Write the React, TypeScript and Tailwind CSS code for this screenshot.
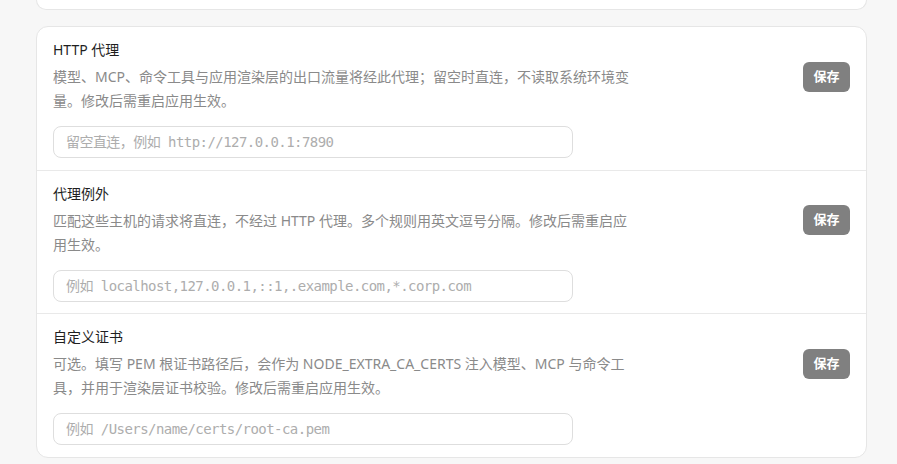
import React, { useState } from 'react';

interface ProxyField {
    id: string;
    title: string;
    description: string;
    placeholder: string;
}

const FIELDS: ProxyField[] = [
    {
        id: 'httpProxy',
        title: 'HTTP 代理',
        description: '模型、MCP、命令工具与应用渲染层的出口流量将经此代理；留空时直连，不读取系统环境变量。修改后需重启应用生效。',
        placeholder: '留空直连，例如 http://127.0.0.1:7890',
    },
    {
        id: 'noProxy',
        title: '代理例外',
        description: '匹配这些主机的请求将直连，不经过 HTTP 代理。多个规则用英文逗号分隔。修改后需重启应用生效。',
        placeholder: '例如 localhost,127.0.0.1,::1,.example.com,*.corp.com',
    },
    {
        id: 'extraCaCerts',
        title: '自定义证书',
        description: '可选。填写 PEM 根证书路径后，会作为 NODE_EXTRA_CA_CERTS 注入模型、MCP 与命令工具，并用于渲染层证书校验。修改后需重启应用生效。',
        placeholder: '例如 /Users/name/certs/root-ca.pem',
    },
];

const FieldRow: React.FC<{ field: ProxyField; last: boolean }> = ({ field, last }) => {
    const [value, setValue] = useState('');

    return (
        <div className={`px-4 pt-[13px] pb-[11.5px] ${last ? '' : 'border-b border-[#e9e9e9]'}`}>
            <div className="flex items-center justify-between">
                <div className="max-w-[584px]">
                    <h3 className="text-[14px] leading-5 text-[#1f1f1f]">{field.title}</h3>
                    <p className="mt-[5px] text-[14px] leading-6 text-[#8a8a8a]">{field.description}</p>
                </div>
                <button className="h-[30px] w-[47px] rounded-md bg-[#808080] text-[13px] font-bold text-white">
                    保存
                </button>
            </div>
            <input
                value={value}
                onChange={e => setValue(e.target.value)}
                placeholder={field.placeholder}
                className="mt-[13px] block h-8 w-[520px] rounded-lg border border-[#dedede] bg-white px-3 text-[14px] tracking-[-0.55px] text-[#333] outline-none placeholder:text-[#adadad] [font-family:'DejaVu_Sans_Mono','Noto_Sans_CJK_SC',monospace]"
            />
        </div>
    );
};

export default function App() {
    return (
        <div className="min-h-[464px] bg-[#f7f7f7] pl-9 pr-[30px] [font-family:'Noto_Sans','Noto_Sans_CJK_SC',sans-serif]">
            {/* tail of the card above */}
            <div className="h-[10px] rounded-b-xl border-x border-b border-[#e6e6e6] bg-white" />

            <div className="mt-4 rounded-xl border border-[#e6e6e6] bg-white">
                {FIELDS.map((field, idx) => (
                    <FieldRow key={field.id} field={field} last={idx === FIELDS.length - 1} />
                ))}
            </div>
        </div>
    );
}
